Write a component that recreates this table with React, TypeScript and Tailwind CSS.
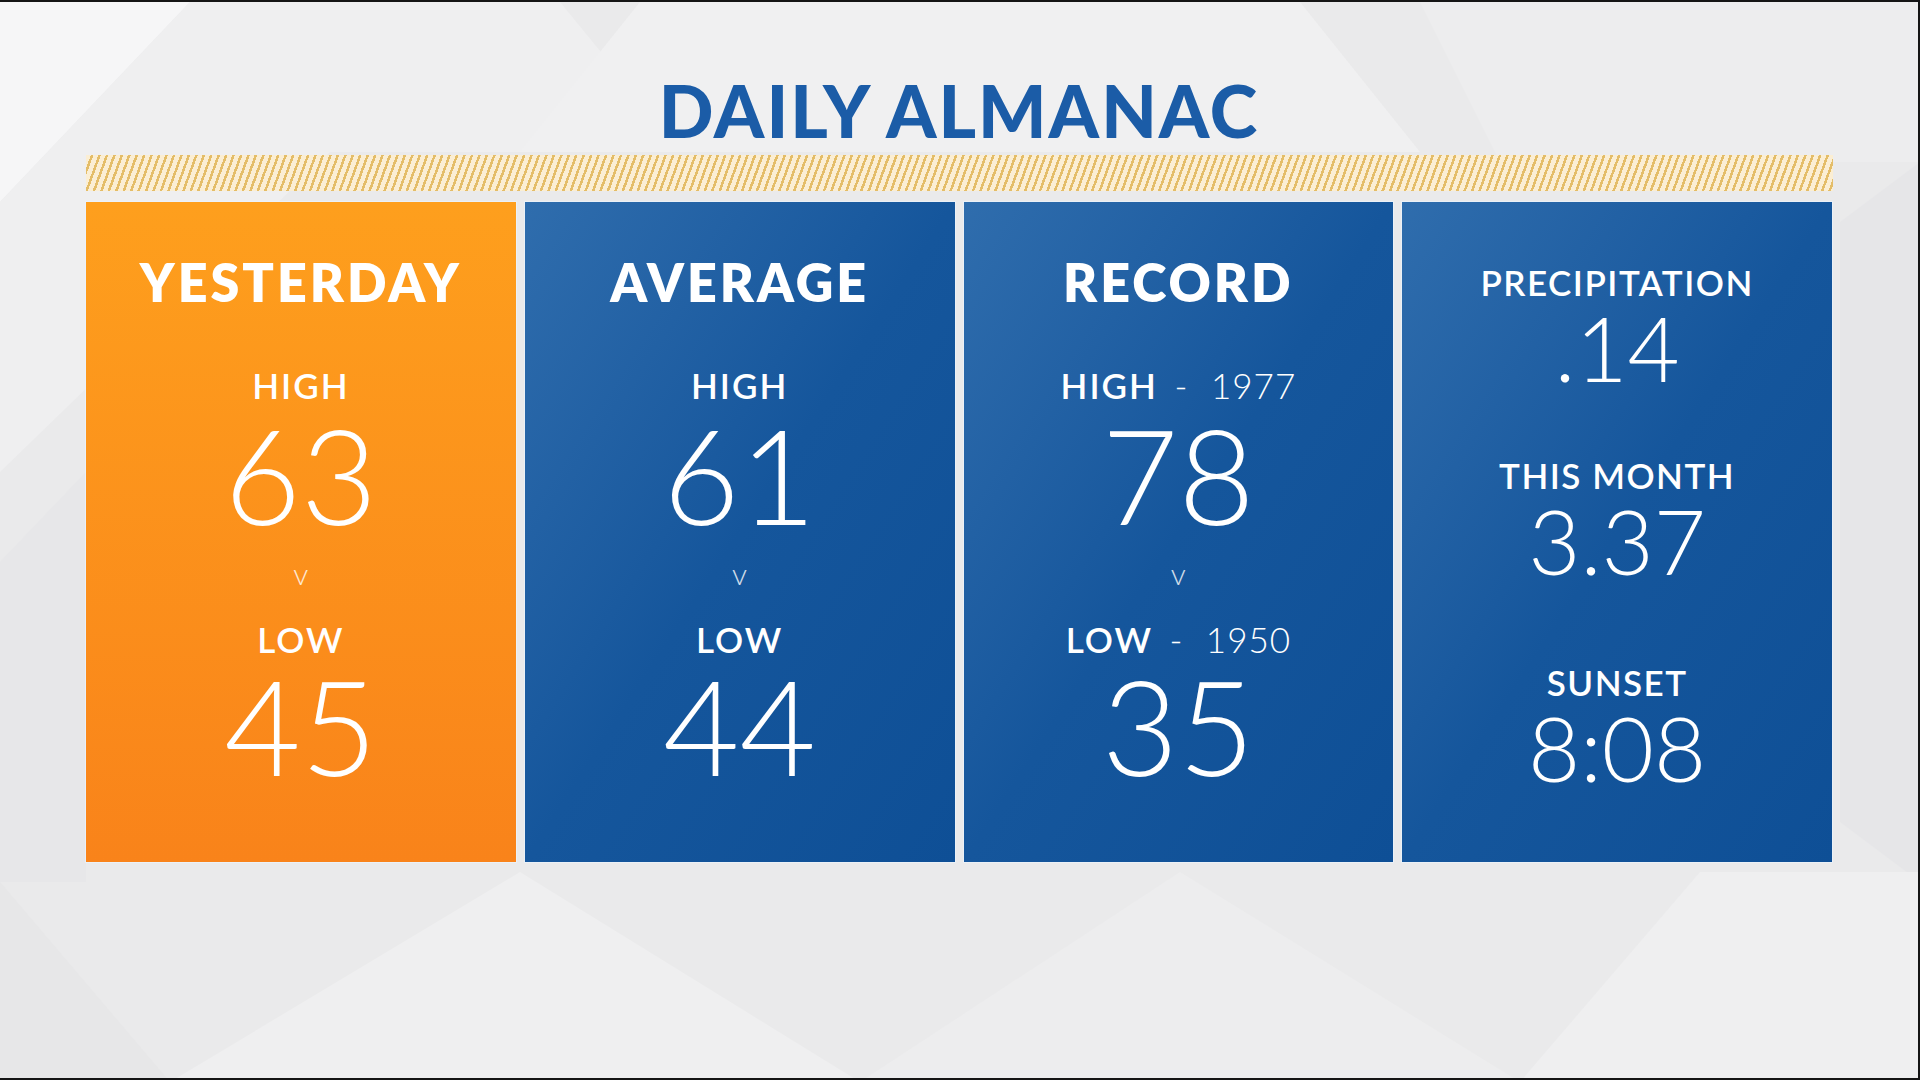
import clsx from "clsx";

type TempCardProps = {
  title: string;
  high: string;
  low: string;
  highYear?: string;
  lowYear?: string;
  tone: "orange" | "blue";
};

const Label = ({ text, year, className }: { text: string; year?: string; className?: string }) => (
  <div className={clsx("text-[35px] leading-none font-semibold tracking-[2px] whitespace-nowrap", className)}>
    {text}
    {year && (
      <>
        {" "}
        <span className="font-light tracking-[1px] [word-spacing:12px] ml-[6px]">- {year}</span>
      </>
    )}
  </div>
);

const TempCard = ({ title, high, low, highYear, lowYear, tone }: TempCardProps) => {
  return (
    <div
      className={clsx(
        "flex flex-col items-center h-[660px] text-white shadow-[0_0_0_1px_rgba(235,243,252,0.7)]",
        tone === "orange"
          ? "bg-linear-to-b from-[#fe9f1d] to-[#f9831a] text-[#fffaf0]"
          : "bg-linear-to-br from-[#2f6dad] via-[#15569c] to-[#0e4f96]"
      )}
    >
      <h2 className="mt-[54px] text-[52px] leading-none font-extrabold tracking-[3px]">{title}</h2>
      <Label text="HIGH" year={highYear} className="mt-[60px]" />
      <span className="mt-[5px] text-[132px] leading-none font-light">{high}</span>
      <span className="mt-[18px] text-[30px] leading-none font-light opacity-80">v</span>
      <Label text="LOW" year={lowYear} className="mt-[34px]" />
      <span className="mt-[2px] text-[132px] leading-none font-light">{low}</span>
    </div>
  );
};

const PrecipCard = () => (
  <div className="flex flex-col items-center h-[660px] text-white bg-linear-to-br from-[#2f6dad] via-[#15569c] to-[#0e4f96] shadow-[0_0_0_1px_rgba(235,243,252,0.7)]">
    <span className="mt-[63px] text-[35px] leading-none font-semibold tracking-[1.5px]">PRECIPITATION</span>
    <span className="mt-[2px] text-[90px] leading-none font-light">.14</span>
    <span className="mt-[66px] text-[35px] leading-none font-semibold tracking-[1.5px]">THIS MONTH</span>
    <span className="mt-[2px] text-[90px] leading-none font-light">3.37</span>
    <span className="mt-[80px] text-[35px] leading-none font-semibold tracking-[1.5px]">SUNSET</span>
    <span className="mt-[2px] text-[90px] leading-none font-light">8:08</span>
  </div>
);

// faint faceted backdrop like the broadcast graphic
const Backdrop = () => (
  <svg className="absolute inset-0" width="1920" height="1080" viewBox="0 0 1920 1080">
    <polygon points="0,0 190,0 0,200" fill="#f6f6f7" />
    <polygon points="190,0 560,0 650,110 600,150 330,150 0,470 0,200" fill="#efeff0" />
    <polygon points="640,0 1300,0 1420,150 520,150" fill="#f0f0f1" />
    <polygon points="1420,0 1920,0 1920,160 1500,160" fill="#ededee" />
    <polygon points="1840,220 1920,160 1920,880 1840,820" fill="#e6e6e8" />
    <polygon points="0,560 86,470 86,880 0,880" fill="#e7e7e9" />
    <polygon points="170,1080 520,870 860,1080" fill="#efeff0" />
    <polygon points="860,1080 1180,870 1520,1080" fill="#ededee" />
    <polygon points="1520,1080 1700,870 1920,870 1920,1080" fill="#efeff0" />
    <polygon points="0,880 170,1080 0,1080" fill="#e7e7e8" />
  </svg>
);

export default function App() {
  return (
    <div className="relative w-[1920px] h-[1080px] overflow-hidden bg-[#eaeaeb] border-t-2 border-r-2 border-b-2 border-[#151515] font-['Lato','Liberation_Sans',sans-serif]">
      <Backdrop />
      <div className="relative flex flex-col items-center pt-[72px]">
        <h1 className="text-[72px] leading-none font-black tracking-[2px] text-[#1b5ca7]">DAILY ALMANAC</h1>
        <div className="mt-[9px] w-[1747px] h-[36px] bg-[repeating-linear-gradient(110deg,#fbeed3_0px,#fbeed3_4.5px,#e4bd68_4.5px,#e4bd68_7px)]" />
        <div className="mt-[11px] w-[1746px] grid grid-cols-4 gap-[9px]">
          <TempCard tone="orange" title="YESTERDAY" high="63" low="45" />
          <TempCard tone="blue" title="AVERAGE" high="61" low="44" />
          <TempCard tone="blue" title="RECORD" high="78" low="35" highYear="1977" lowYear="1950" />
          <PrecipCard />
        </div>
      </div>
    </div>
  );
}
